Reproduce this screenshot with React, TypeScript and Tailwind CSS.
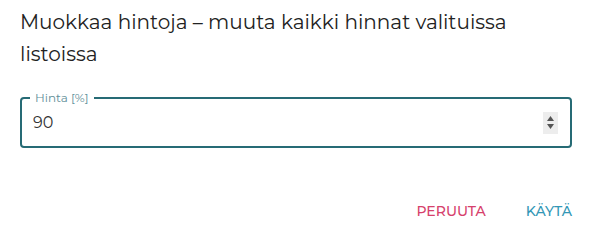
import React from "react";

const font = { fontFamily: "Montserrat, 'Open Sans', 'Noto Sans', sans-serif" };

export default function App() {
  return (
    <div
      className="w-[592px] h-[237px] bg-white flex flex-col"
      style={font}
    >
      <h2 className="px-5 pt-[6px] text-[20px] leading-[32px] text-[#222] font-normal">
        Muokkaa hintoja – muuta kaikki hinnat valituissa listoissa
      </h2>
      <div className="px-5 pt-[27px]">
        <div className="relative border-2 border-[#266b75] rounded-[4px] h-[51px] flex items-center pl-[11px] pr-[12px]">
          <span className="absolute left-[8px] -top-[9px] bg-white px-[5px] text-[12px] leading-[16px] text-[#5f8f99]">
            Hinta [%]
          </span>
          <span className="text-[16px] text-[#333] flex-1">90</span>
          <div className="w-[15px] h-[22px] bg-[#ededed] flex flex-col items-center justify-center gap-[3px]">
            <svg width="7" height="5" viewBox="0 0 7 5"><path d="M3.5 0L7 5H0z" fill="#555" /></svg>
            <svg width="7" height="5" viewBox="0 0 7 5"><path d="M0 0h7L3.5 5z" fill="#555" /></svg>
          </div>
        </div>
      </div>
      <div className="flex-1" />
      <div className="flex justify-end items-center gap-[40px] pr-5 pb-[15px]">
        <span className="text-[14px] font-medium text-[#d6416c]">PERUUTA</span>
        <span className="text-[14px] font-medium text-[#3397b6]">KÄYTÄ</span>
      </div>
    </div>
  );
}
